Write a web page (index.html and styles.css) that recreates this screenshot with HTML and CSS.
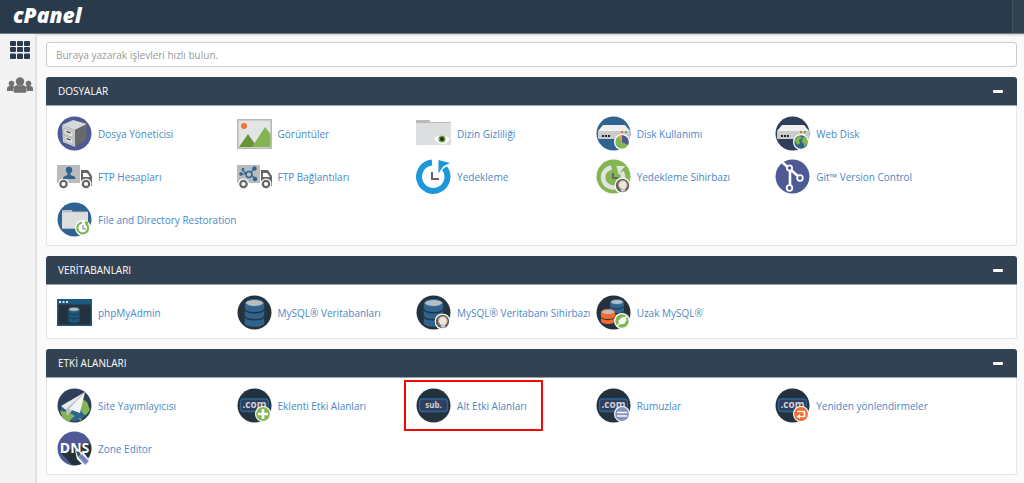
FILE: index.html
```html
<!DOCTYPE html>
<html lang="tr">
<head>
<meta charset="utf-8">
<meta name="viewport" content="width=device-width, initial-scale=1">
<title>cPanel</title>
<link rel="stylesheet" href="styles.css">
</head>
<body>
<svg class="defs" aria-hidden="true">
  <symbol id="truck" viewBox="0 0 35 35">
    <path d="M0 6h23v18H0z" fill="#b9bbbc"/>
    <path d="M24 11h7l4 6v10H24z" fill="#666"/>
    <path d="M26 14h4l3 4h-7z" fill="#fff"/>
    <g fill="#fff" stroke="#fff" stroke-width="2"><circle cx="6.500" cy="25" r="4.500"/><circle cx="29" cy="25" r="4.500"/></g>
    <g fill="#fff" stroke="#666" stroke-width="2.200"><circle cx="6.500" cy="25" r="3.200"/><circle cx="29" cy="25" r="3.200"/></g>
  </symbol>
  <symbol id="folder" viewBox="0 0 35 35">
    <path d="M0 5q0-1 1-1h12q1 0 1 2h20q1 0 1 1v22H0z" fill="#b8b9ba"/>
    <path d="M0 7h35v21q0 1-1 1H1q-1 0-1-1z" fill="#dcddde"/>
  </symbol>
  <symbol id="drive" viewBox="0 0 35 35">
    <path d="M7 9h22l5 6H2z" fill="#f0f0f0"/>
    <path d="M2 15h32v7q0 1-1 1H3q-1 0-1-1z" fill="#c9cbcc"/>
    <path d="M6 19h2v2H6zm3 0h2v2H9zm3 0h2v2h-2z" fill="#222"/>
    <path d="M25 15h2v2h-2z" fill="#f26a2e"/><path d="M29 15h2v2h-2z" fill="#71a83e"/>
  </symbol>
  <symbol id="db" viewBox="0 0 20 28">
    <path d="M0 4v20c0 5 20 5 20 0V4z" fill="currentColor"/>
    <ellipse cx="10" cy="4" rx="9" ry="3.500" fill="#b9bdbf" stroke="currentColor"/>
    <path d="M0 10c1 5 19 5 20 0M0 17c1 5 19 5 20 0" fill="none" stroke="#24323d" stroke-width="1.400"/>
  </symbol>
  <symbol id="wizard" viewBox="0 0 16 16">
    <circle cx="8" cy="8" r="8" fill="#fff"/><circle cx="8" cy="8" r="6.700" fill="#606367"/>
    <path d="M8 3a4.500 4.500 0 0 1 4 7l-2 2-4-.5-2-3A4.500 4.500 0 0 1 8 3z" fill="#e8e5e2" stroke="#c99b6b"/>
    <path d="M6 12h5l-1 2H7z" fill="#ddd"/>
  </symbol>
  <symbol id="com" viewBox="0 0 35 35">
    <circle cx="17.500" cy="17.500" r="17" fill="#24323d"/>
    <rect x="3.500" y="11" width="28" height="12.500" rx="3" fill="#303e60" stroke="#2c6494" stroke-width="1.300"/>
  </symbol>
  <symbol id="globe" viewBox="0 0 16 16">
    <circle cx="8" cy="8" r="8" fill="#fff"/><circle cx="8" cy="8" r="6.700" fill="#2e648f"/>
    <path d="M2 6l3-4 4 1-1 2-2 1 1 3-2 2-2-2zM11 2l3 3 .5 4-3 4-1-4-2-1 1-3z" fill="#84b84f"/>
  </symbol>
</svg>

<header class="topbar">
  <a class="logo" href="#">cPanel</a>
  <div class="topbar-end"></div>
</header>

<div class="layout">
  <nav class="sidebar">
    <a href="#" aria-label="Ana sayfa">
      <svg width="20" height="18" viewBox="0 0 20 18"><path fill="#283a4b" d="M1 0h4q1 0 1 1v3q0 1-1 1H1Q0 5 0 4V1q0-1 1-1zm7 0h4q1 0 1 1v3q0 1-1 1H8Q7 5 7 4V1q0-1 1-1zm7 0h4q1 0 1 1v3q0 1-1 1h-4q-1 0-1-1V1q0-1 1-1zM1 6h4q1 0 1 1v3q0 1-1 1H1q-1 0-1-1V7q0-1 1-1zm7 0h4q1 0 1 1v3q0 1-1 1H8q-1 0-1-1V7q0-1 1-1zm7 0h4q1 0 1 1v3q0 1-1 1h-4q-1 0-1-1V7q0-1 1-1zM1 12.500h4q1 0 1 1V17q0 1-1 1H1q-1 0-1-1v-3.500q0-1 1-1zm7 0h4q1 0 1 1V17q0 1-1 1H8q-1 0-1-1v-3.500q0-1 1-1zm7 0h4q1 0 1 1V17q0 1-1 1h-4q-1 0-1-1v-3.500q0-1 1-1z"/></svg>
    </a>
    <a href="#" aria-label="Kullanıcılar">
      <svg width="26" height="16" viewBox="0 0 26 16" fill="#717171"><circle cx="4.500" cy="6.500" r="2.800"/><circle cx="21.500" cy="6.500" r="2.800"/><path d="M0 14v-2q0-3 3-3h3q1 0 1.500 1Q6 11 6 14zM26 14v-2q0-3-3-3h-3q-1 0-1.500 1 1.500 1 1.500 4z"/><circle cx="13" cy="4.500" r="4.200"/><path d="M6.500 15q-.5-7 4-7 2.500 1.500 5 0 4.500 0 4 7-.5.800-1.500.800H8q-1 0-1.500-.8z"/></svg>
    </a>
  </nav>

  <main class="main">
    <input class="search" type="text" aria-label="İşlev ara" placeholder="Buraya yazarak işlevleri hızlı bulun.">

    <section class="panel">
      <div class="panel-head"><h2>DOSYALAR</h2><button type="button" aria-label="Daralt"></button></div>
      <div class="items">
        <a class="item" href="#"><svg viewBox="0 0 35 35"><circle cx="17.500" cy="17.500" r="17" fill="#4e5a95"/><path d="M5 9l11-5 14 4-12 6z" fill="#d7d8d9"/><path d="M5 9l13 5v17L6 26z" fill="#c9cbcc"/><path d="M18 14l12-6-1 16-11 7z" fill="#68696b"/><path d="M7 12.500l9 3.500v5.500L7 18zM7 19.500l9 3.500v5.500L8 25z" fill="#e1e2e2" stroke="#999" stroke-width=".5"/><path d="M9.500 15.500l4 1.500M9.500 22.500l4 1.500" stroke="#333" stroke-width="1.300"/></svg><span>Dosya Yöneticisi</span></a>
        <a class="item" href="#"><svg viewBox="0 0 35 35"><path d="M.75 3.750h33.500v28.500H.75z" fill="#e3e4e5" stroke="#b5b7b8" stroke-width="1.500"/><circle cx="7" cy="10" r="3" fill="#f47431"/><path d="M2 31l9-13 9 13z" fill="#679536"/><path d="M15 31l13-20 5.500 7v13z" fill="#83b653"/></svg><span>Görüntüler</span></a>
        <a class="item" href="#"><svg viewBox="0 0 35 35"><use href="#folder"/><path d="M18 23q7-7 15-1 2 2-3 5-6 3-12-4z" fill="#fff"/><circle cx="26" cy="23" r="3.600" fill="#71a044"/><circle cx="26" cy="23" r="1.900" fill="#222"/></svg><span>Dizin Gizliliği</span></a>
        <a class="item" href="#"><svg viewBox="0 0 35 35"><circle cx="17.500" cy="17.500" r="17" fill="#2e648f"/><use href="#drive"/><circle cx="26" cy="26" r="8" fill="#fff"/><circle cx="26" cy="26" r="6.700" fill="#83b653"/><path d="M26 26v-6.700a6.700 6.700 0 0 1 6 9.700z" fill="#4e5a95"/><path d="M26 26l-4-5.400q2-1.300 4-1.300z" fill="#ee9c4b"/></svg><span>Disk Kullanımı</span></a>
        <a class="item" href="#"><svg viewBox="0 0 35 35"><circle cx="17.500" cy="17.500" r="17" fill="#303f59"/><use href="#drive"/><use href="#globe" x="18" y="18" width="16" height="16"/></svg><span>Web Disk</span></a>

        <a class="item" href="#"><svg viewBox="0 0 35 35"><use href="#truck"/><circle cx="12" cy="11" r="3.200" fill="#2e648f"/><path d="M10.500 13h3v3l4 1.500q1 1 1 2.500H6q0-2 1-2.500l3.500-1.500z" fill="#2e648f"/></svg><span>FTP Hesapları</span></a>
        <a class="item" href="#"><svg viewBox="0 0 35 35"><use href="#truck"/><g stroke="#2e648f" stroke-width="1.200" fill="#2e648f"><path d="M3 15h6M5 11l5 4M13 14l4-4M14 16l4 3"/><circle cx="4" cy="15" r="1.200"/><circle cx="6" cy="10.500" r=".8"/><circle cx="17.500" cy="9.500" r="1.600"/><circle cx="18" cy="20" r="1.600"/><circle cx="12" cy="15.500" r="3" fill="#b9bbbc" stroke-width="1.500"/></g></svg><span>FTP Bağlantıları</span></a>
        <a class="item" href="#"><svg viewBox="0 0 35 35"><path d="M16 3.500A14.200 14.200 0 1 0 28.500 9" fill="none" stroke="#1b98da" stroke-width="6"/><path d="M22.500 1l11.500 3-7 3.500-4.500 7z" fill="#1b98da"/><path d="M16 13v7h7" fill="none" stroke="#666" stroke-width="2"/></svg><span>Yedekleme</span></a>
        <a class="item" href="#"><svg viewBox="0 0 35 35"><circle cx="17.500" cy="17.500" r="17" fill="#83b653"/><path d="M15.500 8.500A10 10 0 1 0 25.500 13" fill="none" stroke="#e2e4e1" stroke-width="4.500"/><path d="M20.500 7h9l-3 3-4 6z" fill="#e2e4e1"/><path d="M17 14v5h5" fill="none" stroke="#666" stroke-width="2"/><use href="#wizard" x="18.500" y="18.500" width="16" height="16"/></svg><span>Yedekleme Sihirbazı</span></a>
        <a class="item" href="#"><svg viewBox="0 0 35 35"><circle cx="17.500" cy="17.500" r="17" fill="#4e5a95"/><path d="M7.500 3.500l17 15M15 10v18" fill="none" stroke="#fff" stroke-width="2.600"/><g fill="#4e5a95" stroke="#fff" stroke-width="1.800"><circle cx="14.500" cy="9" r="2.600"/><circle cx="14.500" cy="29" r="2.800"/><circle cx="25" cy="19" r="2.800"/></g></svg><span>Git™ Version Control</span></a>

        <a class="item" href="#"><svg viewBox="0 0 35 35"><circle cx="17.500" cy="17.500" r="17" fill="#2e648f"/><use href="#folder" x="5" y="5" width="26" height="26"/><circle cx="26" cy="26" r="8" fill="#fff"/><path d="M25 20.500a5.500 5.500 0 1 0 5 2" fill="none" stroke="#83b653" stroke-width="2.200"/><path d="M27.500 19.500h5L29 24z" fill="#83b653"/><path d="M26 23v4h3" fill="none" stroke="#777"/></svg><span>File and Directory Restoration</span></a>
      </div>
    </section>

    <section class="panel">
      <div class="panel-head"><h2>VERİTABANLARI</h2><button type="button" aria-label="Daralt"></button></div>
      <div class="items">
        <a class="item" href="#"><svg viewBox="0 0 35 35"><path d="M0 4h35v27H0z" fill="#1d587f"/><path d="M1.500 9.500h32v20h-32z" fill="#24323d"/><path d="M2 6h2v2H2zm3.500 0h2v2h-2zM9 6h2v2H9z" fill="#d2dee6"/><use href="#db" x="11" y="12" width="12" height="16" color="#1d587f"/></svg><span>phpMyAdmin</span></a>
        <a class="item" href="#"><svg viewBox="0 0 35 35"><circle cx="17.500" cy="17.500" r="17" fill="#24323d"/><use href="#db" x="7.500" y="4" width="20" height="28" color="#2e648f"/></svg><span>MySQL® Veritabanları</span></a>
        <a class="item" href="#"><svg viewBox="0 0 35 35"><circle cx="17.500" cy="17.500" r="17" fill="#24323d"/><use href="#db" x="7.500" y="4" width="20" height="28" color="#2e648f"/><use href="#wizard" x="18.500" y="18.500" width="16" height="16"/></svg><span>MySQL® Veritabanı Sihirbazı</span></a>
        <a class="item" href="#"><svg viewBox="0 0 35 35"><circle cx="17.500" cy="17.500" r="17" fill="#24323d"/><use href="#db" x="14" y="4" width="14" height="20" color="#2e648f"/><path d="M5 17v9c0 4 14 4 14 0v-9z" fill="#f26a2e"/><ellipse cx="12" cy="17" rx="6.500" ry="2.600" fill="#b9bdbf" stroke="#f26a2e"/><path d="M5 22c1 3.500 13 3.500 14 0" fill="none" stroke="#24323d"/><circle cx="26" cy="26" r="8" fill="#fff"/><circle cx="26" cy="26" r="6.700" fill="#83b653"/><path d="M21 31l3-3M28 24l3-3M23 26l3-3q3-1 4 2l-2 3q-4 2-5-2z" fill="#fff" stroke="#fff" stroke-width="1.300"/></svg><span>Uzak MySQL®</span></a>
      </div>
    </section>

    <section class="panel">
      <div class="panel-head"><h2>ETKİ ALANLARI</h2><button type="button" aria-label="Daralt"></button></div>
      <div class="items">
        <a class="item" href="#"><svg viewBox="0 0 35 35"><circle cx="17.500" cy="17.500" r="17" fill="#303f59"/><path d="M4 20q6-10 17-7 11 2 10 11a17 17 0 0 1-25 6q-3-4-2-10z" fill="#2e648f"/><path d="M24 10l6 4 3 8-4 5-3-1-3-6-3-3zM3 23l8 1 7 4-4 3-2 3-6-4zM22 30l3 1-2 2z" fill="#83b653"/><path d="M28 4L4 18l5 4z" fill="#e9eaeb"/><path d="M28 4L9 22l1 6 4-4z" fill="#bfc3c6"/><path d="M28 4L12 21l11 4z" fill="#f1f2f2"/></svg><span>Site Yayımlayıcısı</span></a>
        <a class="item" href="#"><svg viewBox="0 0 35 35"><use href="#com"/><text class="glyph-text" x="17.500" y="20" text-anchor="middle">.com</text><circle cx="26" cy="26" r="8" fill="#fff"/><circle cx="26" cy="26" r="6.900" fill="#83b653"/><path d="M26 21v10M21 26h10" stroke="#fff" stroke-width="2.600"/></svg><span>Eklenti Etki Alanları</span></a>
        <a class="item marked" href="#"><svg viewBox="0 0 35 35"><use href="#com"/><text class="glyph-text small" x="17.500" y="20" text-anchor="middle">sub.</text></svg><span>Alt Etki Alanları</span></a>
        <a class="item" href="#"><svg viewBox="0 0 35 35"><use href="#com"/><text class="glyph-text" x="17.500" y="20" text-anchor="middle">.com</text><circle cx="26" cy="26" r="8" fill="#fff"/><circle cx="26" cy="26" r="6.900" fill="#8791bf"/><path d="M21 24.500h10M21 28h10" stroke="#fff" stroke-width="1.700"/></svg><span>Rumuzlar</span></a>
        <a class="item" href="#"><svg viewBox="0 0 35 35"><use href="#com"/><text class="glyph-text" x="17.500" y="20" text-anchor="middle">.com</text><circle cx="26" cy="26" r="8" fill="#fff"/><circle cx="26" cy="26" r="6.900" fill="#f26a2e"/><path d="M22 23.500h7.500v5H24" fill="none" stroke="#fff" stroke-width="1.700"/><path d="M25 26v5l-3.500-2.500z" fill="#fff"/></svg><span>Yeniden yönlendirmeler</span></a>

        <a class="item" href="#"><svg viewBox="0 0 35 35"><circle cx="17.500" cy="17.500" r="17" fill="#4e5a95"/><path d="M4 22l11 12a17 17 0 0 0 19-20l-3-3z" fill="#24323d"/><text class="dns-text" x="17.500" y="22" text-anchor="middle">DNS</text><path d="M18 19l9 3 6 8-6 5-7-7z" fill="#fff"/><path d="M21 26l4-3 7 7-4 4z" fill="#8490c5"/><path d="M19 20l3 1 2 2-3 3z" fill="#3c4b57"/><path d="M23 24.500l7 7" stroke="#536098"/></svg><span>Zone Editor</span></a>
      </div>
    </section>
  </main>
</div>
</body>
</html>
```

FILE: styles.css
```css
*, *::after { box-sizing: border-box; }

body {
  margin: 0;
  min-height: 100vh;
  display: flex;
  flex-direction: column;
  background: #fafafa;
  font: 10px/16px "Open Sans", "Noto Sans", sans-serif;
}

.defs { position: absolute; width: 0; height: 0; }

.topbar {
  display: flex;
  justify-content: space-between;
  height: 34px;
  background: #293a4a;
  border-bottom: 1px solid #6f7884;
  box-shadow: 0 1px 2px #ccc;
}

.logo {
  padding-left: 13px;
  color: #fff;
  font-size: 21px;
  font-weight: 800;
  font-style: italic;
  line-height: 30px;
  text-decoration: none;
}

.topbar-end {
  width: 12px;
  background: #334252;
  border-left: 1px solid #435160;
}

.layout { flex: 1; display: flex; }

.sidebar {
  flex: none;
  width: 37px;
  padding: 7px 0 0 5px;
  display: flex;
  flex-direction: column;
  align-items: center;
  gap: 18px;
  background: #f3f3f3;
  border-right: 2px solid #e2e2e2;
}

.sidebar a, .sidebar svg { display: block; }

.main {
  flex: 1;
  min-width: 0;
  padding: 8px 7px 9px 9px;
  display: flex;
  flex-direction: column;
  gap: 10px;
}

.search {
  width: 100%;
  height: 25px;
  padding: 0 9px;
  border: 1px solid #ccc;
  border-radius: 3px;
  background: #fff;
  color: #333;
  font: inherit;
}

.search::placeholder { color: #999; opacity: 1; }

.panel {
  border: 1px solid #e4e4e4;
  border-top: 0;
  border-radius: 3px;
  background: #fff;
}

.panel-head {
  display: flex;
  justify-content: space-between;
  align-items: center;
  height: 29px;
  margin: 0 -1px;
  padding: 0 14px 0 12px;
  background: #334252;
  border-bottom: 1px solid #9aa3ab;
  border-radius: 3px 3px 0 0;
}

.panel-head h2 {
  margin: 0;
  color: #fff;
  font-size: 10px;
  font-weight: 400;
}

.panel-head button {
  width: 10px;
  height: 3px;
  padding: 0;
  border: 0;
  border-radius: 1px;
  background: #fff;
}

.items {
  display: grid;
  grid-template-columns: repeat(5, 19%);
  row-gap: 8px;
  padding: 10px 14px 8px 10px;
}

.item {
  position: relative;
  display: flex;
  align-items: center;
  gap: 6px;
  color: #4a88c7;
  text-decoration: none;
  white-space: nowrap;
}

.item svg { flex: none; width: 35px; height: 35px; }

.marked::after {
  content: "";
  position: absolute;
  inset: -8px auto -8px -12px;
  width: 139px;
  border: 2px solid #f80707;
}

.glyph-text { fill: #d0d3d5; font-size: 10px; font-weight: 700; }
.glyph-text.small { font-size: 8px; }
.dns-text { fill: #fff; font-size: 14px; font-weight: 700; }
```
